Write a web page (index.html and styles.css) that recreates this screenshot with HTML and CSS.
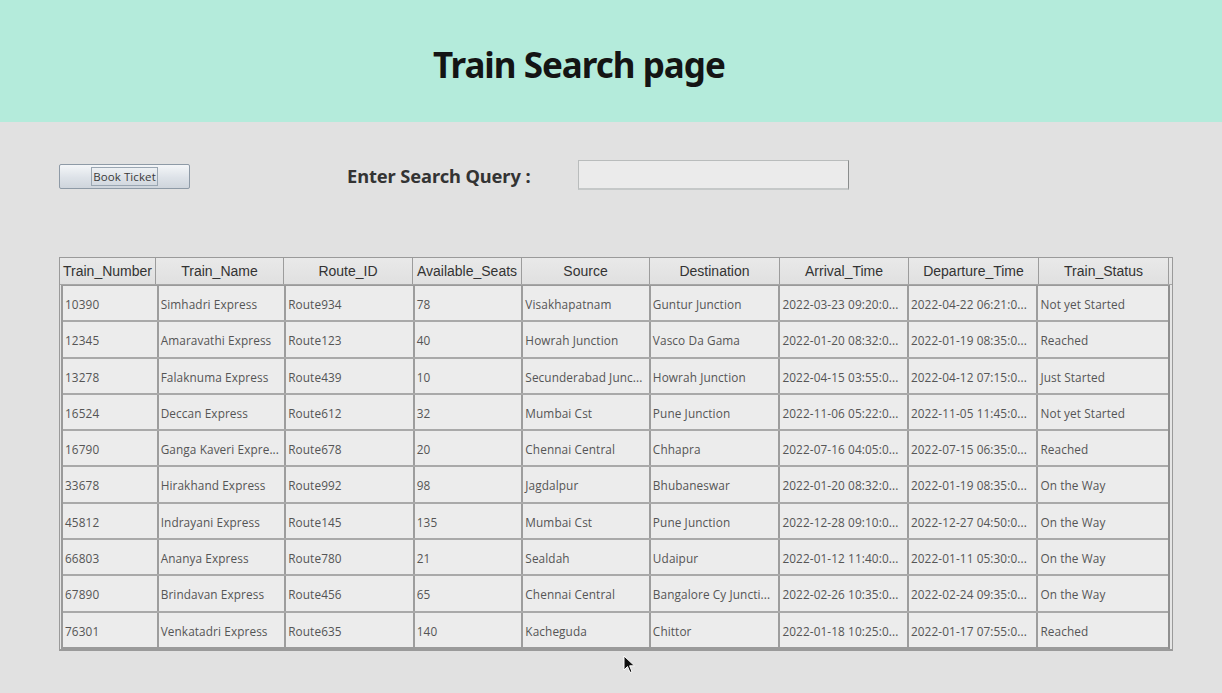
FILE: index.html
```html
<!DOCTYPE html>
<html>
<head>
<meta charset="utf-8">
<link rel="stylesheet" href="styles.css">
</head>
<body>
<header class="banner"><h1 class="title">Train Search page</h1></header>
<main class="content">
  <div class="controls">
    <button class="btn"><span class="btn-label">Book Ticket</span></button>
    <label class="search-label">Enter Search Query :</label>
    <input class="search-input" type="text">
  </div>
  <div class="table">
    <div class="thead">
      <div class="th c1">Train_Number</div>
      <div class="th c2">Train_Name</div>
      <div class="th c3">Route_ID</div>
      <div class="th c4">Available_Seats</div>
      <div class="th c5">Source</div>
      <div class="th c6">Destination</div>
      <div class="th c7">Arrival_Time</div>
      <div class="th c8">Departure_Time</div>
      <div class="th c9">Train_Status</div>
      <div class="th corner"></div>
    </div>
    <div class="tbody">
      <div class="tr"><div class="td c1">10390</div><div class="td c2">Simhadri Express</div><div class="td c3">Route934</div><div class="td c4">78</div><div class="td c5">Visakhapatnam</div><div class="td c6">Guntur Junction</div><div class="td c7">2022-03-23 09:20:0...</div><div class="td c8">2022-04-22 06:21:0...</div><div class="td c9">Not yet Started</div></div>
      <div class="tr"><div class="td c1">12345</div><div class="td c2">Amaravathi Express</div><div class="td c3">Route123</div><div class="td c4">40</div><div class="td c5">Howrah Junction</div><div class="td c6">Vasco Da Gama</div><div class="td c7">2022-01-20 08:32:0...</div><div class="td c8">2022-01-19 08:35:0...</div><div class="td c9">Reached</div></div>
      <div class="tr"><div class="td c1">13278</div><div class="td c2">Falaknuma Express</div><div class="td c3">Route439</div><div class="td c4">10</div><div class="td c5">Secunderabad Junc...</div><div class="td c6">Howrah Junction</div><div class="td c7">2022-04-15 03:55:0...</div><div class="td c8">2022-04-12 07:15:0...</div><div class="td c9">Just Started</div></div>
      <div class="tr"><div class="td c1">16524</div><div class="td c2">Deccan Express</div><div class="td c3">Route612</div><div class="td c4">32</div><div class="td c5">Mumbai Cst</div><div class="td c6">Pune Junction</div><div class="td c7">2022-11-06 05:22:0...</div><div class="td c8">2022-11-05 11:45:0...</div><div class="td c9">Not yet Started</div></div>
      <div class="tr"><div class="td c1">16790</div><div class="td c2">Ganga Kaveri Expre...</div><div class="td c3">Route678</div><div class="td c4">20</div><div class="td c5">Chennai Central</div><div class="td c6">Chhapra</div><div class="td c7">2022-07-16 04:05:0...</div><div class="td c8">2022-07-15 06:35:0...</div><div class="td c9">Reached</div></div>
      <div class="tr"><div class="td c1">33678</div><div class="td c2">Hirakhand Express</div><div class="td c3">Route992</div><div class="td c4">98</div><div class="td c5">Jagdalpur</div><div class="td c6">Bhubaneswar</div><div class="td c7">2022-01-20 08:32:0...</div><div class="td c8">2022-01-19 08:35:0...</div><div class="td c9">On the Way</div></div>
      <div class="tr"><div class="td c1">45812</div><div class="td c2">Indrayani Express</div><div class="td c3">Route145</div><div class="td c4">135</div><div class="td c5">Mumbai Cst</div><div class="td c6">Pune Junction</div><div class="td c7">2022-12-28 09:10:0...</div><div class="td c8">2022-12-27 04:50:0...</div><div class="td c9">On the Way</div></div>
      <div class="tr"><div class="td c1">66803</div><div class="td c2">Ananya Express</div><div class="td c3">Route780</div><div class="td c4">21</div><div class="td c5">Sealdah</div><div class="td c6">Udaipur</div><div class="td c7">2022-01-12 11:40:0...</div><div class="td c8">2022-01-11 05:30:0...</div><div class="td c9">On the Way</div></div>
      <div class="tr"><div class="td c1">67890</div><div class="td c2">Brindavan Express</div><div class="td c3">Route456</div><div class="td c4">65</div><div class="td c5">Chennai Central</div><div class="td c6">Bangalore Cy Juncti...</div><div class="td c7">2022-02-26 10:35:0...</div><div class="td c8">2022-02-24 09:35:0...</div><div class="td c9">On the Way</div></div>
      <div class="tr"><div class="td c1">76301</div><div class="td c2">Venkatadri Express</div><div class="td c3">Route635</div><div class="td c4">140</div><div class="td c5">Kacheguda</div><div class="td c6">Chittor</div><div class="td c7">2022-01-18 10:25:0...</div><div class="td c8">2022-01-17 07:55:0...</div><div class="td c9">Reached</div></div>
    </div>
  </div>
</main>
<svg class="cursor" width="14" height="20" viewBox="0 0 14 20"><path d="M1 1 L1 15 L4.5 11.5 L7 17.5 L9 16.6 L6.6 10.8 L11.5 10.8 Z" fill="#111" stroke="#fff" stroke-width="1"/></svg>
</body>
</html>
```

FILE: styles.css
```css
html, body {
  margin: 0;
  padding: 0;
}
body {
  width: 1222px;
  height: 693px;
  background: #e1e1e1;
  font-family: "Open Sans", "Liberation Sans", sans-serif;
  overflow: hidden;
  position: relative;
}
.banner {
  height: 122px;
  background: #b4ebdb;
  display: flex;
  align-items: flex-start;
}
.title {
  margin: 42px 0 0 433px;
  font-family: "Noto Sans", sans-serif;
  font-weight: 700;
  font-size: 35px;
  line-height: 46px;
  color: #141414;
  letter-spacing: -1px;
}
.content {
  padding: 38px 0 0 59px;
}
.controls {
  display: flex;
  align-items: center;
  height: 30px;
}
.btn {
  width: 131px;
  height: 25px;
  margin: 3px 0 0 0;
  padding: 0;
  border: 1px solid #8e9aa6;
  border-radius: 2px;
  background: linear-gradient(#f4f6f8, #dde2e8 55%, #cfd5dc);
  display: flex;
  align-items: center;
  justify-content: center;
  font-family: "Open Sans", sans-serif;
  font-size: 11.5px;
  color: #3a3a3a;
}
.btn-label {
  border: 1px solid #9aa6b2;
  padding: 0 1px;
  line-height: 17px;
  letter-spacing: 0.1px;
}
.search-label {
  margin-left: 157px;
  font-family: "Noto Sans", sans-serif;
  font-weight: 700;
  font-size: 18.3px;
  color: #333;
  letter-spacing: -0.1px;
}
.search-input {
  margin-left: 48px;
  width: 271px;
  height: 30px;
  box-sizing: border-box;
  border: 1px solid #b9bcbc;
  border-right-color: #8a8d8d;
  border-bottom: 2px solid #c5c8c8;
  background: #ebebeb;
  padding: 0;
}
.table {
  margin-top: 67px;
  width: 1114px;
  border: 1px solid #9a9a9a;
  border-bottom: 2px solid #9a9a9a;
  box-sizing: border-box;
  background: #e6e6e6;
}
.thead {
  display: flex;
  height: 26px;
  border-bottom: 1px solid #a6a6a6;
  background: linear-gradient(#e9e9e9, #e0e0e0);
}
.th {
  box-sizing: border-box;
  border-right: 1px solid #9c9c9c;
  font-family: "Liberation Sans", sans-serif;
  font-size: 14px;
  color: #333;
  line-height: 27px;
  text-align: center;
  white-space: nowrap;
  overflow: hidden;
}
.th.c1 { text-align: left; padding-left: 3px; }
.c1 { width: 96px; }
.c2 { width: 128px; }
.c3 { width: 129px; }
.c4 { width: 109px; }
.c5 { width: 128px; }
.c6 { width: 130px; }
.c7 { width: 129px; }
.c8 { width: 130px; }
.c9 { width: 130px; }
.th.corner { width: 3px; border-right: none; }
.tbody {
  margin-left: 1px;
  width: 1109px;
  border-left: 2px solid #9a9a9a;
  border-right: 2px solid #8f8f8f;
  border-top: 1px solid #9a9a9a;
  box-sizing: border-box;
}
.tr {
  display: flex;
  height: 36.3px;
  box-sizing: border-box;
  border-bottom: 2px solid #a9a9a9;
  background: #ececec;
}
.tr:last-child { border-bottom: 2px solid #9a9a9a; }
.td {
  box-sizing: border-box;
  border-right: 2px solid #9d9d9d;
  font-family: "Open Sans", sans-serif;
  font-size: 11.8px;
  color: #555;
  line-height: 36px;
  padding-left: 2px;
  letter-spacing: 0.1px;
  white-space: nowrap;
  overflow: hidden;
}
.td.c9 { border-right: none; }
.cursor {
  position: absolute;
  left: 623px;
  top: 655px;
}
```
